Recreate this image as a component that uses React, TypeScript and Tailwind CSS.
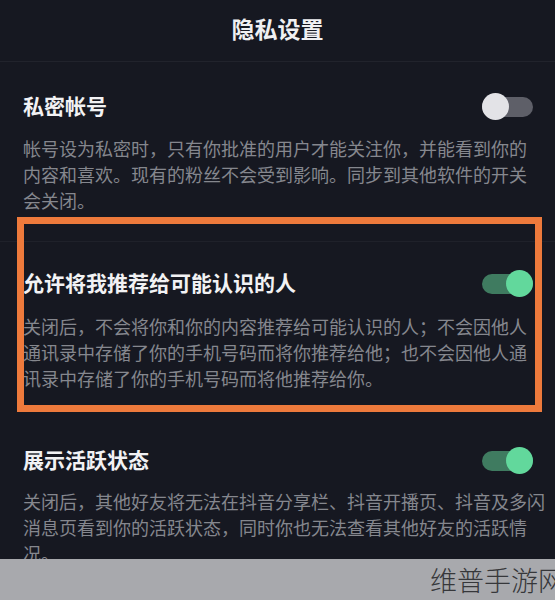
const font = { fontFamily: '"Noto Sans CJK SC", "Noto Sans", sans-serif' };

function Toggle({ on }: { on: boolean }) {
  return (
    <div className="relative h-[27px] w-[51px] shrink-0">
      <div
        className={`absolute left-0 right-0 top-[4px] h-[20px] rounded-full ${on ? "bg-[#3f7b60]" : "bg-[#5e5f68]"}`}
      />
      <div
        className={`absolute top-0 h-[27px] w-[27px] rounded-full ${on ? "right-0 bg-[#62d89c]" : "left-0 bg-[#e3e3e7]"}`}
      />
    </div>
  );
}

function Section({
  title,
  on,
  lines,
  gap,
}: {
  title: string;
  on: boolean;
  lines: string[];
  gap: string;
}) {
  return (
    <div className="pl-[23px] pr-[22px]">
      <div className="flex h-[28px] items-center justify-between">
        <span className="text-[21px] font-bold text-[#f2f2f4]">{title}</span>
        <Toggle on={on} />
      </div>
      <div className={`${gap} text-[18px] leading-[26px] text-[#85878e]`}>
        {lines.map((l) => (
          <div key={l} className="whitespace-nowrap">
            {l}
          </div>
        ))}
      </div>
    </div>
  );
}

export default function App() {
  return (
    <div className="relative h-[600px] w-[555px] overflow-hidden bg-[#161821]" style={font}>
      {/* header */}
      <div className="flex h-[62px] items-center justify-center border-b border-[#21232c] pb-[4px]">
        <span className="text-[23px] font-semibold text-[#f0f0f2]">隐私设置</span>
      </div>

      <div className="border-b border-[#1f212a] pt-[30px] pb-[28px]">
        <Section
          title="私密帐号"
          on={false}
          gap="mt-[15px]"
          lines={[
            "帐号设为私密时，只有你批准的用户才能关注你，并能看到你的",
            "内容和喜欢。现有的粉丝不会受到影响。同步到其他软件的开关",
            "会关闭。",
          ]}
        />
      </div>

      <div className="pt-[27px] pb-[28px]">
        <Section
          title="允许将我推荐给可能认识的人"
          on={true}
          gap="mt-[16px]"
          lines={[
            "关闭后，不会将你和你的内容推荐给可能认识的人；不会因他人",
            "通讯录中存储了你的手机号码而将你推荐给他；也不会因他人通",
            "讯录中存储了你的手机号码而将他推荐给你。",
          ]}
        />
      </div>

      <div className="pt-[27px]">
        <Section
          title="展示活跃状态"
          on={true}
          gap="mt-[14px]"
          lines={[
            "关闭后，其他好友将无法在抖音分享栏、抖音开播页、抖音及多闪",
            "消息页看到你的活跃状态，同时你也无法查看其他好友的活跃情",
            "况。",
          ]}
        />
      </div>

      {/* highlight annotation */}
      <div className="absolute left-[17px] top-[217px] h-[195px] w-[525px] border-[7px] border-[#ee7a3c]" />

      {/* watermark bar */}
      <div className="absolute bottom-0 left-0 right-0 flex h-[41px] items-center bg-[#a8a9ad] pl-[430px]">
        <span className="whitespace-nowrap text-[27px] font-light leading-none text-[#36373a]">维普手游网</span>
      </div>
    </div>
  );
}
